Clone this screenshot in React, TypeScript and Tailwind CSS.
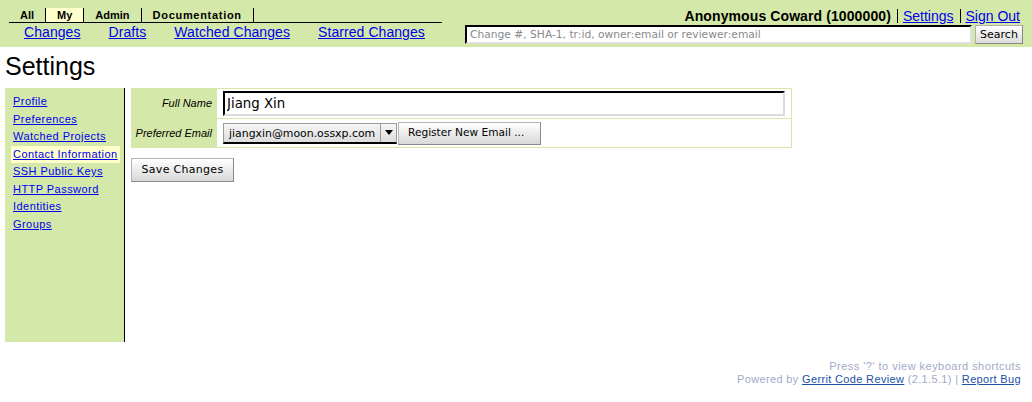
import { useState } from 'react';

const green = "bg-[#d4e9a9]";

const tabs = ["All", "My", "Admin", "Documentation"];
const subLinks = ["Changes", "Drafts", "Watched Changes", "Starred Changes"];
const sideLinks = [
	"Profile",
	"Preferences",
	"Watched Projects",
	"Contact Information",
	"SSH Public Keys",
	"HTTP Password",
	"Identities",
	"Groups",
];

function Header() {
	return (
		<div className={"flex justify-between h-[47px] " + green}>
			<div className="pl-[9px] pt-[8px]">
				<div className="flex w-[433px] h-[15px] border-b border-black font-['Liberation_Sans',Arial,sans-serif] text-[11px] font-bold leading-[14px]">
					{tabs.map((t) => (
						<div key={t}
							className={"h-[14px] px-[11px] border-r border-black "
								+ (t === "My" ? "bg-[#ffffcc] " : "")
								+ (t === "Documentation" ? "tracking-[0.7px]" : "")}
						>{t}</div>
					))}
				</div>
				<div className="flex ml-[1px] pt-[1px] font-['Liberation_Sans',Arial,sans-serif] text-[14px] leading-[16px] tracking-[0.07px]">
					{subLinks.map((l) => (
						<a key={l} href="#" className="px-[14px] text-[#0000ee] underline">{l}</a>
					))}
				</div>
			</div>
			<div className="pr-[9px] pt-[9px] flex flex-col items-end">
				<div className="flex items-center h-[14px] mr-[3px] font-['Liberation_Sans',Arial,sans-serif] leading-[14px]">
					<span className="text-[14px] font-bold text-black tracking-[0.1px]">Anonymous Coward (1000000)</span>
					<a href="#" className="ml-[6px] pl-[5px] border-l border-black text-[14px] text-[#0000ee] underline">Settings</a>
					<a href="#" className="ml-[6px] pl-[5px] border-l border-black text-[14px] text-[#0000ee] underline">Sign Out</a>
				</div>
				<div className="flex mt-[2px]">
					<input
						className="w-[507px] h-[19px] bg-white border-2 border-t-black border-l-black border-r-[#e0e0e0] border-b-[#e0e0e0] px-[3px] font-['DejaVu_Sans',sans-serif] text-[10.7px] text-black placeholder:text-[#8a8a8a] outline-none"
						placeholder="Change #, SHA-1, tr:id, owner:email or reviewer:email"
					/>
					<button className="ml-[3px] w-[48px] h-[19px] bg-gradient-to-b from-[#ffffff] to-[#dcdcdc] border border-[#b0b0b0] border-r-[#888] border-b-[#888] font-['DejaVu_Sans',sans-serif] text-[11px] text-black leading-none">Search</button>
				</div>
			</div>
		</div>
	);
}

function Sidebar({active, setActive}: {active: string; setActive: (s: string) => void}) {
	return (
		<div className={"w-[120px] h-[254px] border-r border-black pt-[5px] " + green}>
			{sideLinks.map((l) => (
				<div key={l} className="h-[17.5px] pl-[6px] font-['Liberation_Sans',Arial,sans-serif] text-[11px] leading-[17.5px] tracking-[0.45px]">
					<a href="#"
						onClick={(e) => { e.preventDefault(); setActive(l); }}
						className={"inline-block px-[2px] text-[#0000ee] underline " + (l === active ? "bg-[#ffffcc]" : "")}
					>{l}</a>
				</div>
			))}
		</div>
	);
}

function ContactForm() {
	const [name, setName] = useState("Jiang Xin");
	const btn = "bg-gradient-to-b from-[#ffffff] to-[#d8d8d8] border border-[#b4b4b4] border-r-[#8a8a8a] border-b-[#8a8a8a] font-['DejaVu_Sans',sans-serif] text-black";

	return (
		<div className="ml-[6px]">
			<div className="w-[661px] border border-[#d4e9a9] grid grid-cols-[85px_1fr]">
				<div className={"h-[30px] flex items-center justify-end pr-[5px] pb-[1px] italic text-[11px] font-['Liberation_Sans',Arial,sans-serif] " + green}>Full Name</div>
				<div className="h-[30px] border-b border-[#d4e9a9] flex items-center pl-[6px]">
					<input
						value={name}
						onChange={(e) => setName(e.target.value)}
						className="w-[562px] h-[25px] bg-white border-2 border-t-black border-l-black border-r-[#dcdcdc] border-b-[#dcdcdc] px-[2px] font-['DejaVu_Sans',sans-serif] text-[13.33px] text-black outline-none"
					/>
				</div>
				<div className={"h-[28px] flex items-center justify-end pr-[5px] italic text-[11px] font-['Liberation_Sans',Arial,sans-serif] " + green}>Preferred Email</div>
				<div className="h-[28px] flex items-center pl-[6px]">
					<div className="flex items-stretch w-[174px] h-[21px] bg-gradient-to-b from-[#f6f6f6] to-[#dcdcdc] border border-[#9a9a9a] border-b-2 border-b-black">
						<span className="flex-1 pl-[5px] font-['DejaVu_Sans',sans-serif] text-[10.9px] leading-[19px] text-black">jiangxin@moon.ossxp.com</span>
						<span className="w-[16px] border-l border-[#9a9a9a] flex items-center justify-center">
							<svg width="8" height="5" viewBox="0 0 8 5"><path d="M0 0h8L4 5z" fill="#000" /></svg>
						</span>
					</div>
					<button className={"ml-[1px] w-[143px] h-[23px] text-left pl-[9px] text-[10.6px] " + btn}>Register New Email ...</button>
				</div>
			</div>
			<button className={"mt-[10px] w-[103px] h-[24px] text-[11px] tracking-[0.3px] " + btn}>Save Changes</button>
		</div>
	);
}

function Footer() {
	return (
		<div className="mt-[18px] pr-[11px] text-right font-['Liberation_Sans',Arial,sans-serif] text-[11px] leading-[13px] text-[#a3aac8] tracking-[0.35px]">
			<div className="tracking-[0.47px]">Press '?' to view keyboard shortcuts</div>
			<div>
				Powered by <a href="#" className="text-[#2050a8] underline">Gerrit Code Review</a> (2.1.5.1) | <a href="#" className="text-[#2050a8] underline">Report Bug</a>
			</div>
		</div>
	);
}

function App() {
	const [active, setActive] = useState("Contact Information");

	return (
		<div className="w-[1032px] h-[402px] bg-white text-black overflow-hidden">
			<Header />
			<div className="px-[5px]">
				<h1 className="mt-[7px] h-[25px] text-[25px] leading-[25px] font-['Liberation_Sans',Arial,sans-serif]">Settings</h1>
				<div className="flex mt-[9px]">
					<Sidebar active={active} setActive={setActive} />
					<ContactForm />
				</div>
			</div>
			<Footer />
		</div>
	);
}

export default App;
